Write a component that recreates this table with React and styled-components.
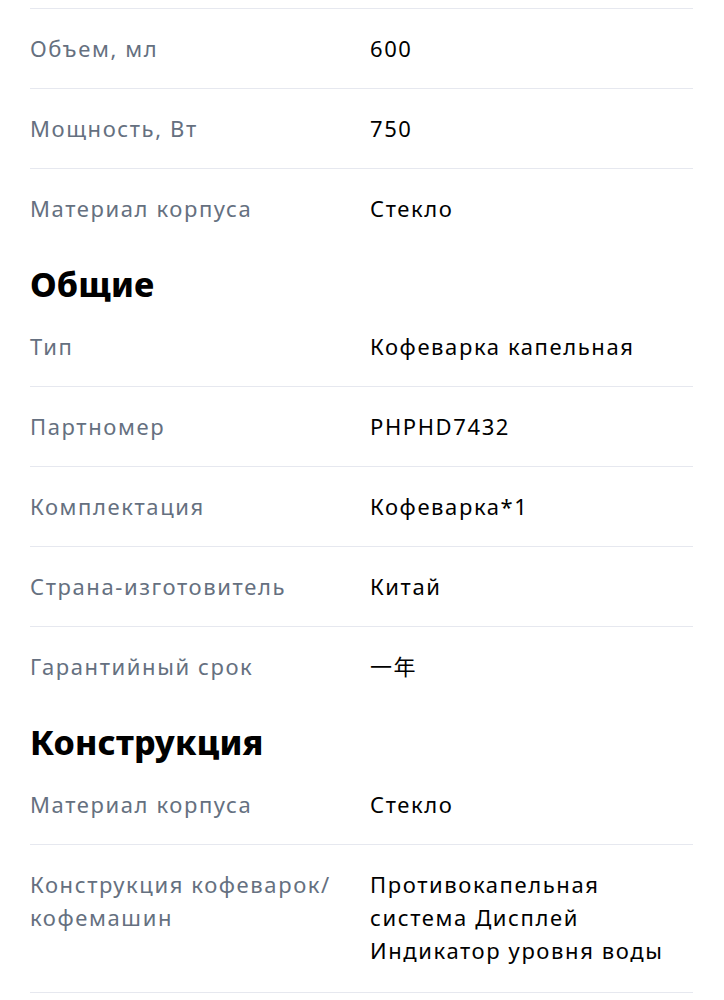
import React from "react";
import styled, { createGlobalStyle } from "styled-components";

const Global = createGlobalStyle`
  html, body { margin: 0; padding: 0; background: #fff; }
  body { font-family: "Noto Sans", "Noto Sans CJK SC", sans-serif; }
`;

const Page = styled.div`
  padding: 8px 31px 0 30px;
  display: flex;
  flex-direction: column;
`;

const Section = styled.section`
  display: flex;
  flex-direction: column;
`;

const Heading = styled.h2`
  margin: 0;
  box-sizing: border-box;
  height: 59px;
  padding-top: 13px;
  display: flex;
  align-items: center;
  font-size: 34px;
  font-weight: 800;
  color: #000;
  letter-spacing: 0.2px;
`;

const Row = styled.div`
  display: grid;
  grid-template-columns: 340px 1fr;
  padding: 23px 0 ${(p) => (p.$bottom ? "25px" : "23px")};
  border-top: ${(p) => (p.$noTop ? "none" : "1px solid #e6e8ef")};
  border-bottom: ${(p) => (p.$bottom ? "1px solid #e6e8ef" : "none")};
  font-size: 22px;
  line-height: 33px;
  letter-spacing: 1.6px;
`;

const Label = styled.div`
  color: #657080;
  padding-right: 2px;
`;

const Value = styled.div`
  color: #000;
  padding-right: 24px;
`;

const Row0 = ({ label, value, noTop, bottom }) => (
  <Row $noTop={noTop} $bottom={bottom}>
    <Label>{label}</Label>
    <Value>{value}</Value>
  </Row>
);

export default function App() {
  return (
    <>
      <Global />
      <Page>
        <Section>
          <Row0 label="Объем, мл" value="600" />
          <Row0 label="Мощность, Вт" value="750" />
          <Row0 label="Материал корпуса" value="Стекло" />
        </Section>
        <Section>
          <Heading>Общие</Heading>
          <Row0 noTop label="Тип" value="Кофеварка капельная" />
          <Row0 label="Партномер" value="PHPHD7432" />
          <Row0 label="Комплектация" value="Кофеварка*1" />
          <Row0 label="Страна-изготовитель" value="Китай" />
          <Row0 label="Гарантийный срок" value="一年" />
        </Section>
        <Section>
          <Heading>Конструкция</Heading>
          <Row0 noTop label="Материал корпуса" value="Стекло" />
          <Row0
            bottom
            label="Конструкция кофеварок/ кофемашин"
            value="Противокапельная система Дисплей Индикатор уровня воды"
          />
        </Section>
      </Page>
    </>
  );
}
